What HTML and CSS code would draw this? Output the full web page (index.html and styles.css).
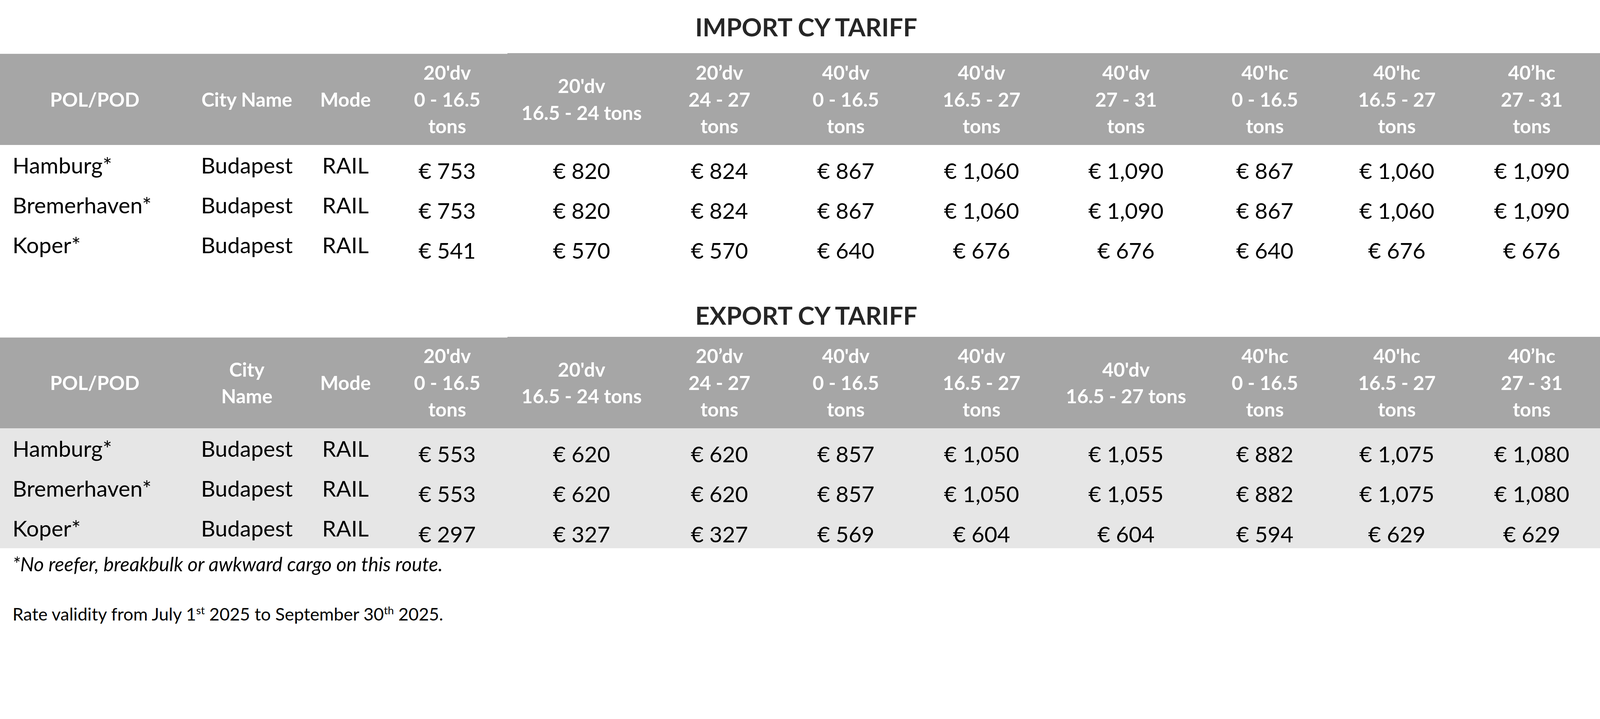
FILE: index.html
```html
<!DOCTYPE html>
<html lang="en">
<head>
<meta charset="utf-8">
<title>CY Tariff</title>
<link rel="stylesheet" href="styles.css">
</head>
<body>
<section class="section section--import">
  <h1 class="title">IMPORT CY TARIFF</h1>
  <table class="tariff">
    <colgroup>
      <col class="c1"><col class="c2"><col class="c3"><col class="c4"><col class="c5"><col class="c6">
      <col class="c7"><col class="c8"><col class="c9"><col class="c10"><col class="c11"><col class="c12">
    </colgroup>
    <thead>
      <tr>
        <th class="hd notch">POL/POD</th>
        <th class="hd notch">City Name</th>
        <th class="hd notch">Mode</th>
        <th class="hd notch">20'dv<br>0 - 16.5<br>tons</th>
        <th class="hd">20'dv<br>16.5 - 24 tons</th>
        <th class="hd">20’dv<br>24 - 27<br>tons</th>
        <th class="hd">40'dv<br>0 - 16.5<br>tons</th>
        <th class="hd">40'dv<br>16.5 - 27<br>tons</th>
        <th class="hd">40'dv<br>27 - 31<br>tons</th>
        <th class="hd">40'hc<br>0 - 16.5<br>tons</th>
        <th class="hd">40'hc<br>16.5 - 27<br>tons</th>
        <th class="hd">40’hc<br>27 - 31<br>tons</th>
      </tr>
    </thead>
    <tbody>
      <tr>
        <td class="port">Hamburg*</td><td class="txt">Budapest</td><td class="txt">RAIL</td>
        <td class="price">€ 753</td><td class="price">€ 820</td><td class="price">€ 824</td><td class="price">€ 867</td><td class="price">€ 1,060</td><td class="price">€ 1,090</td><td class="price">€ 867</td><td class="price">€ 1,060</td><td class="price">€ 1,090</td>
      </tr>
      <tr>
        <td class="port">Bremerhaven*</td><td class="txt">Budapest</td><td class="txt">RAIL</td>
        <td class="price">€ 753</td><td class="price">€ 820</td><td class="price">€ 824</td><td class="price">€ 867</td><td class="price">€ 1,060</td><td class="price">€ 1,090</td><td class="price">€ 867</td><td class="price">€ 1,060</td><td class="price">€ 1,090</td>
      </tr>
      <tr>
        <td class="port">Koper*</td><td class="txt">Budapest</td><td class="txt">RAIL</td>
        <td class="price">€ 541</td><td class="price">€ 570</td><td class="price">€ 570</td><td class="price">€ 640</td><td class="price">€ 676</td><td class="price">€ 676</td><td class="price">€ 640</td><td class="price">€ 676</td><td class="price">€ 676</td>
      </tr>
    </tbody>
  </table>
</section>

<section class="section section--export">
  <h1 class="title">EXPORT CY TARIFF</h1>
  <table class="tariff tariff--shaded">
    <colgroup>
      <col class="c1"><col class="c2"><col class="c3"><col class="c4"><col class="c5"><col class="c6">
      <col class="c7"><col class="c8"><col class="c9"><col class="c10"><col class="c11"><col class="c12">
    </colgroup>
    <thead>
      <tr>
        <th class="hd notch">POL/POD</th>
        <th class="hd notch">City<br>Name</th>
        <th class="hd notch">Mode</th>
        <th class="hd notch">20'dv<br>0 - 16.5<br>tons</th>
        <th class="hd">20'dv<br>16.5 - 24 tons</th>
        <th class="hd">20’dv<br>24 - 27<br>tons</th>
        <th class="hd">40'dv<br>0 - 16.5<br>tons</th>
        <th class="hd">40'dv<br>16.5 - 27<br>tons</th>
        <th class="hd">40'dv<br>16.5 - 27 tons</th>
        <th class="hd">40'hc<br>0 - 16.5<br>tons</th>
        <th class="hd">40'hc<br>16.5 - 27<br>tons</th>
        <th class="hd">40’hc<br>27 - 31<br>tons</th>
      </tr>
    </thead>
    <tbody>
      <tr>
        <td class="port">Hamburg*</td><td class="txt">Budapest</td><td class="txt">RAIL</td>
        <td class="price">€ 553</td><td class="price">€ 620</td><td class="price">€ 620</td><td class="price">€ 857</td><td class="price">€ 1,050</td><td class="price">€ 1,055</td><td class="price">€ 882</td><td class="price">€ 1,075</td><td class="price">€ 1,080</td>
      </tr>
      <tr>
        <td class="port">Bremerhaven*</td><td class="txt">Budapest</td><td class="txt">RAIL</td>
        <td class="price">€ 553</td><td class="price">€ 620</td><td class="price">€ 620</td><td class="price">€ 857</td><td class="price">€ 1,050</td><td class="price">€ 1,055</td><td class="price">€ 882</td><td class="price">€ 1,075</td><td class="price">€ 1,080</td>
      </tr>
      <tr>
        <td class="port">Koper*</td><td class="txt">Budapest</td><td class="txt">RAIL</td>
        <td class="price">€ 297</td><td class="price">€ 327</td><td class="price">€ 327</td><td class="price">€ 569</td><td class="price">€ 604</td><td class="price">€ 604</td><td class="price">€ 594</td><td class="price">€ 629</td><td class="price">€ 629</td>
      </tr>
    </tbody>
  </table>
  <p class="note">*No reefer, breakbulk or awkward cargo on this route.</p>
  <p class="validity">Rate validity from July 1<span class="ord">st</span> 2025 to September 30<span class="ord">th</span> 2025.</p>
</section>
</body>
</html>
```

FILE: styles.css
```css
html, body {
  margin: 0;
  padding: 0;
  background: #ffffff;
}

body {
  font-family: Lato, "Open Sans", "Liberation Sans", sans-serif;
  color: #000000;
}

.section--import {
  padding-top: 13px;
}

.section--export {
  margin-top: 73px;
}

.title {
  margin: 0;
  font-size: 64px;
  line-height: 111px;
  font-weight: 700;
  color: #262626;
  text-align: center;
  width: 4128px;
}

.section--import .title {
  margin-bottom: 12.4px;
}

.tariff {
  width: 4102px;
  table-layout: fixed;
  border-collapse: collapse;
  border-spacing: 0;
}

.c1 { width: 485.3px; }
.c2 { width: 293.3px; }
.c3 { width: 211.6px; }
.c4 { width: 309.3px; }
.c5 { width: 378.7px; }
.c6 { width: 327.1px; }
.c7 { width: 320px; }
.c8 { width: 375.1px; }
.c9 { width: 364.4px; }
.c10 { width: 346.7px; }
.c11 { width: 328.9px; }
.c12 { width: 361.8px; }

.hd {
  height: 234.7px;
  padding: 0;
  background: #a6a6a6;
  color: #ffffff;
  font-size: 49.8px;
  line-height: 68.4px;
  font-weight: 700;
  text-align: center;
  vertical-align: middle;
}

.notch {
  box-shadow: inset 0 1.8px 0 #ffffff;
}

.tariff td {
  height: 102.2px;
  padding: 0;
  font-size: 56.9px;
  line-height: 64.9px;
  vertical-align: middle;
  white-space: nowrap;
}

.tariff .port {
  padding-left: 32px;
  text-align: left;
}

.tariff .txt {
  text-align: center;
}

.tariff .price {
  text-align: center;
  padding-top: 28.4px;
  height: 73.8px;
}

.tariff--shaded tbody {
  background: #e6e6e6;
}

.note {
  margin: 13.8px 0 0;
  padding-left: 32px;
  font-size: 50px;
  line-height: 53.3px;
  font-style: italic;
}

.validity {
  margin: 74.7px 0 0;
  padding-left: 32px;
  font-size: 45px;
  line-height: 53.3px;
}

.ord {
  font-size: 0.62em;
  vertical-align: super;
  line-height: 0;
}
```
